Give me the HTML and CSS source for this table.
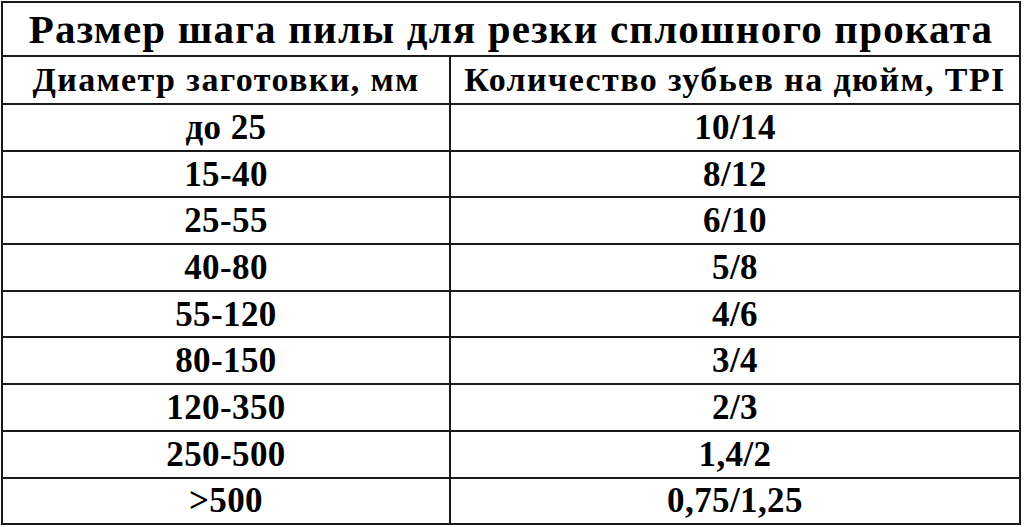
FILE: index.html
```html
<!DOCTYPE html>
<html lang="ru">
<head>
<meta charset="utf-8">
<link rel="stylesheet" href="styles.css">
</head>
<body>
<table class="saw">
  <colgroup><col class="c1"><col class="c2"></colgroup>
  <tr class="title"><th colspan="2">Размер шага пилы для резки сплошного проката</th></tr>
  <tr class="head"><th>Диаметр заготовки, мм</th><th>Количество зубьев на дюйм, TPI</th></tr>
  <tr><td>до 25</td><td>10/14</td></tr>
  <tr><td>15-40</td><td>8/12</td></tr>
  <tr><td>25-55</td><td>6/10</td></tr>
  <tr><td>40-80</td><td>5/8</td></tr>
  <tr><td>55-120</td><td>4/6</td></tr>
  <tr><td>80-150</td><td>3/4</td></tr>
  <tr><td>120-350</td><td>2/3</td></tr>
  <tr><td>250-500</td><td>1,4/2</td></tr>
  <tr><td>&gt;500</td><td>0,75/1,25</td></tr>
</table>
</body>
</html>
```
FILE: styles.css
```css
html, body {
  margin: 0;
  padding: 0;
  background: #fff;
}
body {
  padding: 1px 0 0 1px;
  font-family: "Liberation Serif", "Times New Roman", serif;
  font-weight: bold;
  color: #000;
}
.saw {
  border-collapse: collapse;
  width: 1018px;
  table-layout: fixed;
}
.c1 { width: 448px; }
.c2 { width: 570px; }
.saw th, .saw td {
  border: 2px solid #1a1a1a;
  text-align: center;
  padding: 0;
  font-weight: bold;
  line-height: 1;
}
.title th {
  height: 52px;
  font-size: 41px;
  letter-spacing: 1.2px;
}
.head th {
  height: 46px;
  font-size: 34px;
  letter-spacing: 1.4px;
}
.saw td {
  height: 44.7px;
  font-size: 35px;
  letter-spacing: 0.4px;
}
```
